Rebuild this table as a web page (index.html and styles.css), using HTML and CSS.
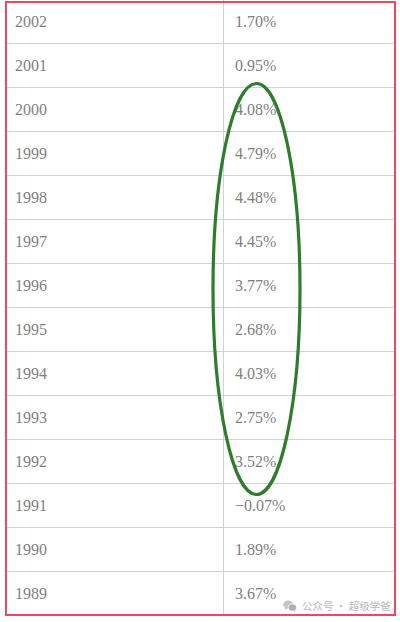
FILE: index.html
```html
<!DOCTYPE html>
<html lang="zh">
<head>
<meta charset="utf-8">
<link rel="stylesheet" href="styles.css">
</head>
<body>
<div class="sheet">
  <div class="table">
    <div class="row"><div class="year">2002</div><div class="val">1.70%</div></div>
    <div class="row"><div class="year">2001</div><div class="val">0.95%</div></div>
    <div class="row"><div class="year">2000</div><div class="val">4.08%</div></div>
    <div class="row"><div class="year">1999</div><div class="val">4.79%</div></div>
    <div class="row"><div class="year">1998</div><div class="val">4.48%</div></div>
    <div class="row"><div class="year">1997</div><div class="val">4.45%</div></div>
    <div class="row"><div class="year">1996</div><div class="val">3.77%</div></div>
    <div class="row"><div class="year">1995</div><div class="val">2.68%</div></div>
    <div class="row"><div class="year">1994</div><div class="val">4.03%</div></div>
    <div class="row"><div class="year">1993</div><div class="val">2.75%</div></div>
    <div class="row"><div class="year">1992</div><div class="val">3.52%</div></div>
    <div class="row"><div class="year">1991</div><div class="val">−0.07%</div></div>
    <div class="row"><div class="year">1990</div><div class="val">1.89%</div></div>
    <div class="row"><div class="year">1989</div><div class="val">3.67%</div></div>
  </div>
  <div class="frame"></div>
  <svg class="ellipse" width="400" height="622" viewBox="0 0 400 622">
    <ellipse cx="256.5" cy="289" rx="43.5" ry="205.5" fill="none" stroke="#2f7d2c" stroke-width="3.2"/>
  </svg>
  <div class="watermark">
    <svg class="wx" width="14" height="12" viewBox="0 0 14 12">
      <ellipse cx="5.2" cy="4.6" rx="5" ry="4.2" fill="#c4c4c4"/>
      <path d="M2.4 7.6 L1.6 10 L4.4 8.4 Z" fill="#c4c4c4"/>
      <ellipse cx="9.4" cy="7.6" rx="4.2" ry="3.5" fill="#b0b0b0" stroke="#fff" stroke-width="0.8"/>
      <path d="M11.6 10.2 L12.6 11.9 L10.2 10.8 Z" fill="#b0b0b0"/>
    </svg>
    <span class="wm-text">公众号 · 超级学爸</span>
  </div>
</div>
</body>
</html>
```

FILE: styles.css
```css
html, body {
  margin: 0;
  padding: 0;
  background: #ffffff;
}

.sheet {
  position: relative;
  width: 400px;
  height: 622px;
  overflow: hidden;
}

.table {
  margin-left: 5px;
  width: 391px;
  display: flex;
  flex-direction: column;
}

.row {
  display: grid;
  grid-template-columns: 219px 1fr;
  height: 44px;
  box-sizing: border-box;
  border-bottom: 1px solid #c8d4e4;
  font-family: "Liberation Serif", "Times New Roman", serif;
  font-size: 16px;
  color: #808080;
}

.year {
  box-sizing: border-box;
  border-right: 1px solid #c8d4e4;
  padding-left: 10px;
  display: flex;
  align-items: center;
}

.val {
  padding-left: 11px;
  display: flex;
  align-items: center;
}

.frame {
  position: absolute;
  left: 5px;
  top: 1px;
  width: 391px;
  height: 615px;
  box-sizing: border-box;
  border: 2px solid #ea4a5c;
}

.ellipse {
  position: absolute;
  left: 0;
  top: 0;
}

.watermark {
  position: absolute;
  left: 283px;
  top: 598px;
  display: flex;
  align-items: center;
  gap: 5px;
  white-space: nowrap;
}

.wm-text {
  font-family: "Noto Sans CJK SC", "Noto Sans", sans-serif;
  font-size: 10.5px;
  color: #b8b8b8;
  letter-spacing: 0;
}
```
